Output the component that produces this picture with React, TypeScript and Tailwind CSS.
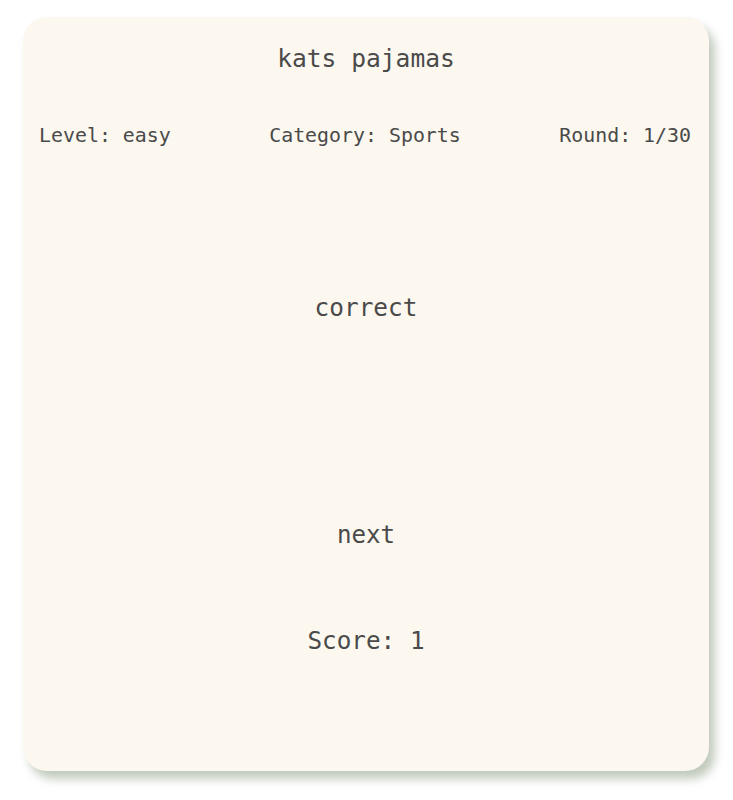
import React from "react";

export default function App() {
  return (
    <div className="min-h-[800px] w-[733px] bg-white pt-[17px] pl-[23px]">
      <div
        className="flex h-[754px] w-[686px] flex-col rounded-[24px] bg-[#fcf8ef] text-[#4a4a4a] shadow-[6px_8px_10px_rgba(120,140,110,0.45)]"
        style={{ fontFamily: '"DejaVu Sans Mono", "Liberation Mono", monospace' }}
      >
        <div className="mt-[26px] text-center text-[24.6px] leading-[32px]">kats pajamas</div>
        <div className="mt-[47px] flex justify-between pl-[16px] pr-[18px] text-[19.9px] leading-[28px]">
          <span>Level: easy</span>
          <span>Category: Sports</span>
          <span>Round: 1/30</span>
        </div>
        <div className="mt-[142px] text-center text-[24.4px] leading-[32px]">correct</div>
        <div className="mt-[195px] text-center text-[24.2px] leading-[32px]">next</div>
        <div className="mt-[74px] text-center text-[24.3px] leading-[32px]">Score: 1</div>
      </div>
    </div>
  );
}
